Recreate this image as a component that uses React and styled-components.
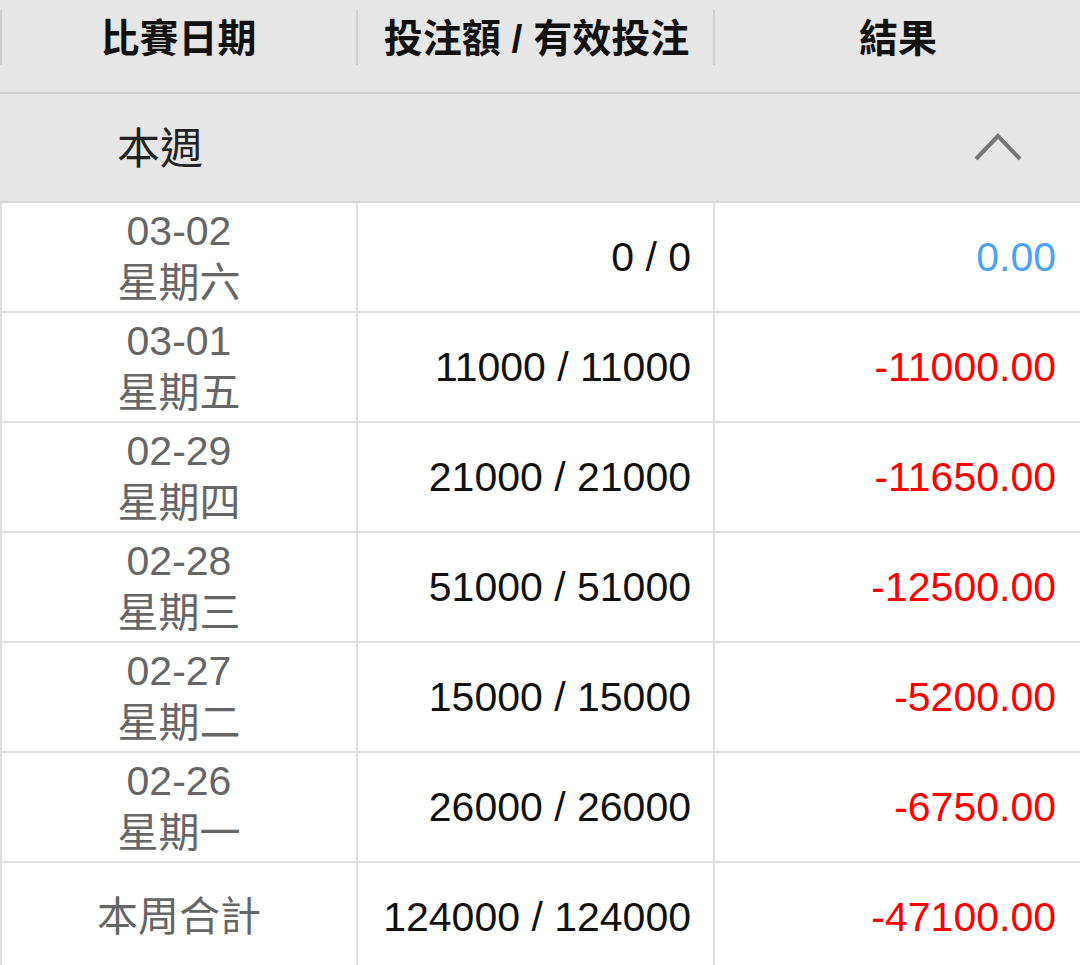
import React from "react";
import styled, { createGlobalStyle } from "styled-components";

const GlobalStyle = createGlobalStyle`
  body {
    margin: 0;
    background: #ffffff;
    font-family: "Liberation Sans", "Noto Sans CJK TC", sans-serif;
  }
`;

const Page = styled.div`
  width: 1080px;
`;

const HeaderRow = styled.div`
  display: grid;
  grid-template-columns: 357px 357px 1fr;
  height: 92px;
  background: #e6e6e6;
  border-bottom: 2px solid #cfcfcf;
`;

const HeaderCell = styled.div`
  display: flex;
  align-items: center;
  justify-content: center;
  height: 92px;
  position: relative;
  font-size: 39px;
  font-weight: 700;
  color: #111;
  padding-bottom: 22px;
  padding-left: ${(p) => (p.$first ? "0" : "2px")};
  box-sizing: border-box;
  &::before {
    content: "";
    position: absolute;
    left: ${(p) => (p.$first ? "0" : "-1px")};
    top: 10px;
    height: 55px;
    width: 2px;
    background: #cfcfcf;
  }
`;

const SectionRow = styled.div`
  display: flex;
  align-items: center;
  justify-content: space-between;
  height: 109px;
  background: #e6e6e6;
  border-bottom: 2px solid #d6d6d6;
  padding: 0 56px 6px 117px;
  box-sizing: border-box;
  font-size: 43px;
  color: #222;
  svg {
    margin-top: 4px;
  }
`;

const Chevron = () => (
  <svg width="50" height="32" viewBox="0 0 50 32">
    <polyline
      points="2,28 24,5 46,28"
      fill="none"
      stroke="#777"
      strokeWidth="4"
    />
  </svg>
);

const Table = styled.div`
  border-left: 2px solid #dedede;
`;

const Row = styled.div`
  display: grid;
  grid-template-columns: 356px 357px 1fr;
  height: 108px;
  border-bottom: 2px solid #dedede;
`;

const Cell = styled.div`
  display: flex;
  flex-direction: column;
  justify-content: center;
  align-items: ${(p) => (p.$align === "center" ? "center" : "flex-end")};
  padding-right: ${(p) => (p.$align === "center" ? "0" : p.$last ? "24px" : "22px")};
  border-right: ${(p) => (p.$last ? "none" : "2px solid #dedede")};
  font-size: 41px;
  color: ${(p) => p.$color || "#111"};
`;

const DateLine = styled.span`
  line-height: 52px;
  color: #666;
`;

const data = [
  { date: "03-02", day: "星期六", bet: "0 / 0", result: "0.00" },
  { date: "03-01", day: "星期五", bet: "11000 / 11000", result: "-11000.00" },
  { date: "02-29", day: "星期四", bet: "21000 / 21000", result: "-11650.00" },
  { date: "02-28", day: "星期三", bet: "51000 / 51000", result: "-12500.00" },
  { date: "02-27", day: "星期二", bet: "15000 / 15000", result: "-5200.00" },
  { date: "02-26", day: "星期一", bet: "26000 / 26000", result: "-6750.00" },
];

const resultColor = (v) => (parseFloat(v) < 0 ? "#ff0000" : "#4aa2f4");

export default function App() {
  return (
    <Page>
      <GlobalStyle />
      <HeaderRow>
        <HeaderCell $first>比賽日期</HeaderCell>
        <HeaderCell>投注額 / 有效投注</HeaderCell>
        <HeaderCell>結果</HeaderCell>
      </HeaderRow>
      <SectionRow>
        <span>本週</span>
        <Chevron />
      </SectionRow>
      <Table>
        {data.map((d) => (
          <Row key={d.date}>
            <Cell $align="center">
              <DateLine>{d.date}</DateLine>
              <DateLine>{d.day}</DateLine>
            </Cell>
            <Cell>{d.bet}</Cell>
            <Cell $last $color={resultColor(d.result)}>
              {d.result}
            </Cell>
          </Row>
        ))}
        <Row>
          <Cell $align="center">
            <DateLine>本周合計</DateLine>
          </Cell>
          <Cell>124000 / 124000</Cell>
          <Cell $last $color="#ff0000">
            -47100.00
          </Cell>
        </Row>
      </Table>
    </Page>
  );
}
